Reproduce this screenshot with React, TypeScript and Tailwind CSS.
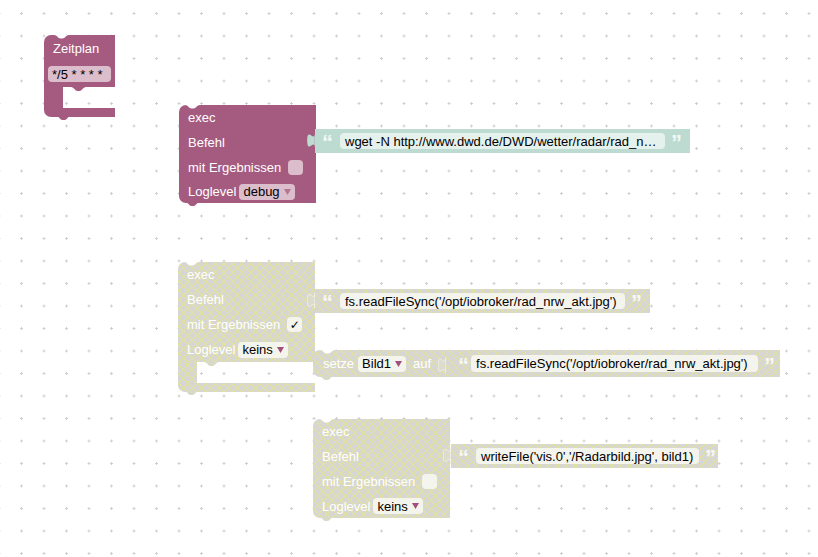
import React from 'react';

// disabled blocks: grey with yellow cross hatch (Blockly disabled pattern at 50%)
const HATCH =
  'bg-[#d6d6d4] bg-[image:repeating-linear-gradient(45deg,#e0e0a6_0_0.8px,transparent_0.8px_6.36px),repeating-linear-gradient(-45deg,#e0e0a6_0_0.8px,transparent_0.8px_6.36px)]';
const PLUM = 'bg-[#a55b80]';
const MINT = 'bg-[#bddbd1]';

type Fill = { fill: string };

// next-connection tab hanging under a block
const Tab = ({ className, fill }: { className: string } & Fill) => (
  <svg className={`absolute ${className}`} width="15" height="5" viewBox="0 0 15 5">
    <path d="M0 0 C3 0 4 4 6.5 4 L8.5 4 C11 4 12 0 15 0 Z" fill={fill} />
  </svg>
);

// previous-connection dent cut into the top edge
const Dent = ({ className }: { className: string }) => (
  <svg className={`absolute ${className}`} width="15" height="4" viewBox="0 0 15 4">
    <path d="M0 0 C3 0 4 3.5 6.5 3.5 L8.5 3.5 C11 3.5 12 0 15 0 Z" fill="#fff" />
  </svg>
);

// output tab of a value block
const Plug = ({ className, fill, stroke }: { className: string; stroke?: string } & Fill) => (
  <svg className={`absolute ${className}`} width="8" height="19" viewBox="0 0 8 20">
    <path d="M8 4 C8 15 0 -3 0 12 C0 27 8 9 8 20 Z" fill={fill} stroke={stroke ?? 'none'} strokeWidth="0.8" />
  </svg>
);

const Quote = ({ children, className = '' }: { children: React.ReactNode; className?: string }) => (
  <span className={`w-[13px] h-[18px] text-[22px] leading-none font-bold text-white/80 ${className}`}>{children}</span>
);

const Arrow = ({ color }: { color: string }) => (
  <svg width="7" height="6" viewBox="0 0 7 6">
    <path d="M0 0 H7 L3.5 6 Z" fill={color} />
  </svg>
);

function Dropdown({ label, disabled }: { label: string; disabled?: boolean }) {
  return (
    <div
      className={`h-[16px] px-[4px] rounded-[4px] flex items-center gap-[4px] text-black ${
        disabled ? 'bg-white/70' : 'bg-[#dbbdcc]'
      }`}
    >
      <span>{label}</span>
      <Arrow color={disabled ? '#a0507a' : '#b27594'} />
    </div>
  );
}

function Checkbox({ checked, disabled }: { checked?: boolean; disabled?: boolean }) {
  return (
    <div
      className={`w-[15px] h-[15px] rounded-[4px] flex items-center justify-center text-black text-[12px] font-['DejaVu_Sans',sans-serif] ${
        disabled ? 'bg-white/70' : 'bg-[#dbbdcc]'
      }`}
    >
      {checked ? '✓' : ''}
    </div>
  );
}

function ExecBlock({
  pos,
  disabled,
  checked,
  level,
  statement,
  lastRow,
}: {
  pos: string;
  disabled?: boolean;
  checked?: boolean;
  level: string;
  statement?: boolean;
  lastRow: string;
}) {
  const fill = disabled ? HATCH : PLUM;
  const svgFill = disabled ? '#d9d9c8' : '#a55b80';
  return (
    <div className={`absolute ${pos} w-[137px]`}>
      <div className={`relative ${fill} rounded-tl-[7px] ${statement ? '' : 'rounded-bl-[7px]'}`}>
        <div className="h-[25px] flex items-center pl-[9px]">exec</div>
        <div className="h-[25px] flex items-center pl-[9px]">Befehl</div>
        <div className="h-[25px] flex items-center pl-[9px] gap-[7px]">
          <span>mit Ergebnissen</span>
          <Checkbox checked={checked} disabled={disabled} />
        </div>
        <div className={`${lastRow} flex items-center pl-[9px] gap-[3px]`}>
          <span>Loglevel</span>
          <Dropdown label={level} disabled={disabled} />
        </div>
        <Dent className="left-[6px] top-0" />
      </div>
      {statement && (
        <>
          <div className="flex h-[21px]">
            <div className={`${fill} w-[19px]`} />
            <div className="relative flex-1">
              <Tab className="left-[7px] top-0" fill={svgFill} />
            </div>
          </div>
          <div className={`${fill} h-[9px] rounded-bl-[7px]`} />
        </>
      )}
      <Tab className="left-[6px] -bottom-[4px]" fill={svgFill} />
    </div>
  );
}

function TextBlock({
  pos,
  width,
  fieldW,
  text,
  disabled,
}: {
  pos: string;
  width: string;
  fieldW: string;
  text: string;
  disabled?: boolean;
}) {
  return (
    <div className={`absolute ${pos} ${width} h-[24px] flex items-center pl-[7px] ${disabled ? HATCH : MINT}`}>
      <Plug
        className="-left-[8px] top-0"
        fill={disabled ? '#dcdccc' : '#bddbd1'}
        stroke={disabled ? '#f4f4ec' : undefined}
      />
      <Quote>“</Quote>
      <div
        className={`ml-[5px] ${fieldW} h-[16px] rounded-[4px] flex items-center px-[5px] text-black whitespace-nowrap overflow-hidden ${
          disabled ? 'bg-white/70' : 'bg-[#e5f1ec]'
        }`}
      >
        {text}
      </div>
      <Quote className="ml-[6px]">”</Quote>
    </div>
  );
}

function Zeitplan() {
  return (
    <div className="absolute left-[44px] top-[35px] w-[71px]">
      <div className={`relative ${PLUM} h-[52px] rounded-tl-[7px]`}>
        <div className="h-[26px] flex items-center pl-[9px]">Zeitplan</div>
        <div className="mt-[5px] ml-[4px] w-[63px] h-[16px] rounded-[4px] bg-[#dbbdcc] flex items-center pl-[4px] text-black">
          */5 * * * *
        </div>
        <Dent className="left-[10px] top-0" />
      </div>
      <div className="flex h-[21px]">
        <div className={`${PLUM} w-[19px]`} />
        <div className="relative flex-1">
          <Tab className="left-[8px] top-0" fill="#a55b80" />
        </div>
      </div>
      <div className={`${PLUM} h-[9px] rounded-bl-[7px]`} />
      <Tab className="left-[12px] -bottom-[4px]" fill="#a55b80" />
    </div>
  );
}

function SetzeBlock() {
  return (
    <div className={`absolute left-[313px] top-[350px] w-[467px] h-[27px] rounded-l-[7px] flex items-center pl-[10px] ${HATCH}`}>
      <Dent className="left-[7px] top-0" />
      <span>setze</span>
      <div className="ml-[4px]">
        <Dropdown label="Bild1" disabled />
      </div>
      <span className="ml-[7px]">auf</span>
      <div className="relative ml-[7px] w-[7px] h-[20px]">
        <Plug className="left-0 top-0" fill="#dcdccc" stroke="#f4f4ec" />
      </div>
      <Quote className="ml-[13px]">“</Quote>
      <div className="w-[287px] h-[17px] rounded-[4px] flex items-center px-[5px] text-black bg-white/70 whitespace-nowrap">
        fs.readFileSync('/opt/iobroker/rad_nrw_akt.jpg')
      </div>
      <Quote className="ml-[6px]">”</Quote>
      <Tab className="left-[6px] -bottom-[4px]" fill="#d9d9c8" />
    </div>
  );
}

export default function App() {
  return (
    <div className="relative w-[818px] h-[557px] overflow-hidden bg-white text-white text-[13px] leading-none font-['Liberation_Sans',Arial,sans-serif]">
      <svg className="absolute inset-0" width="818" height="557">
        <defs>
          <pattern id="grid" patternUnits="userSpaceOnUse" width="22.5" height="22.5" x="10.25" y="2.25">
            <path d="M9.75 11.25 H12.75 M11.25 9.75 V12.75" stroke="#cfcfcf" strokeWidth="1" />
          </pattern>
        </defs>
        <rect width="818" height="557" fill="url(#grid)" />
      </svg>

      <Zeitplan />

      <ExecBlock pos="left-[179px] top-[105px]" level="debug" lastRow="h-[23px]" />
      <TextBlock
        pos="left-[315px] top-[129px]"
        width="w-[375px]"
        fieldW="w-[325px]"
        text="wget -N http://www.dwd.de/DWD/wetter/radar/rad_n…"
      />

      <ExecBlock pos="left-[178px] top-[262px]" level="keins" checked disabled statement lastRow="h-[25px]" />
      <TextBlock
        pos="left-[315px] top-[289px]"
        width="w-[335px]"
        fieldW="w-[285px]"
        text="fs.readFileSync('/opt/iobroker/rad_nrw_akt.jpg')"
        disabled
      />

      <SetzeBlock />

      <ExecBlock pos="left-[313px] top-[419px]" level="keins" disabled lastRow="h-[24px]" />
      <TextBlock
        pos="left-[451px] top-[444px]"
        width="w-[267px]"
        fieldW="w-[223px]"
        text="writeFile('vis.0','/Radarbild.jpg', bild1)"
        disabled
      />
    </div>
  );
}
